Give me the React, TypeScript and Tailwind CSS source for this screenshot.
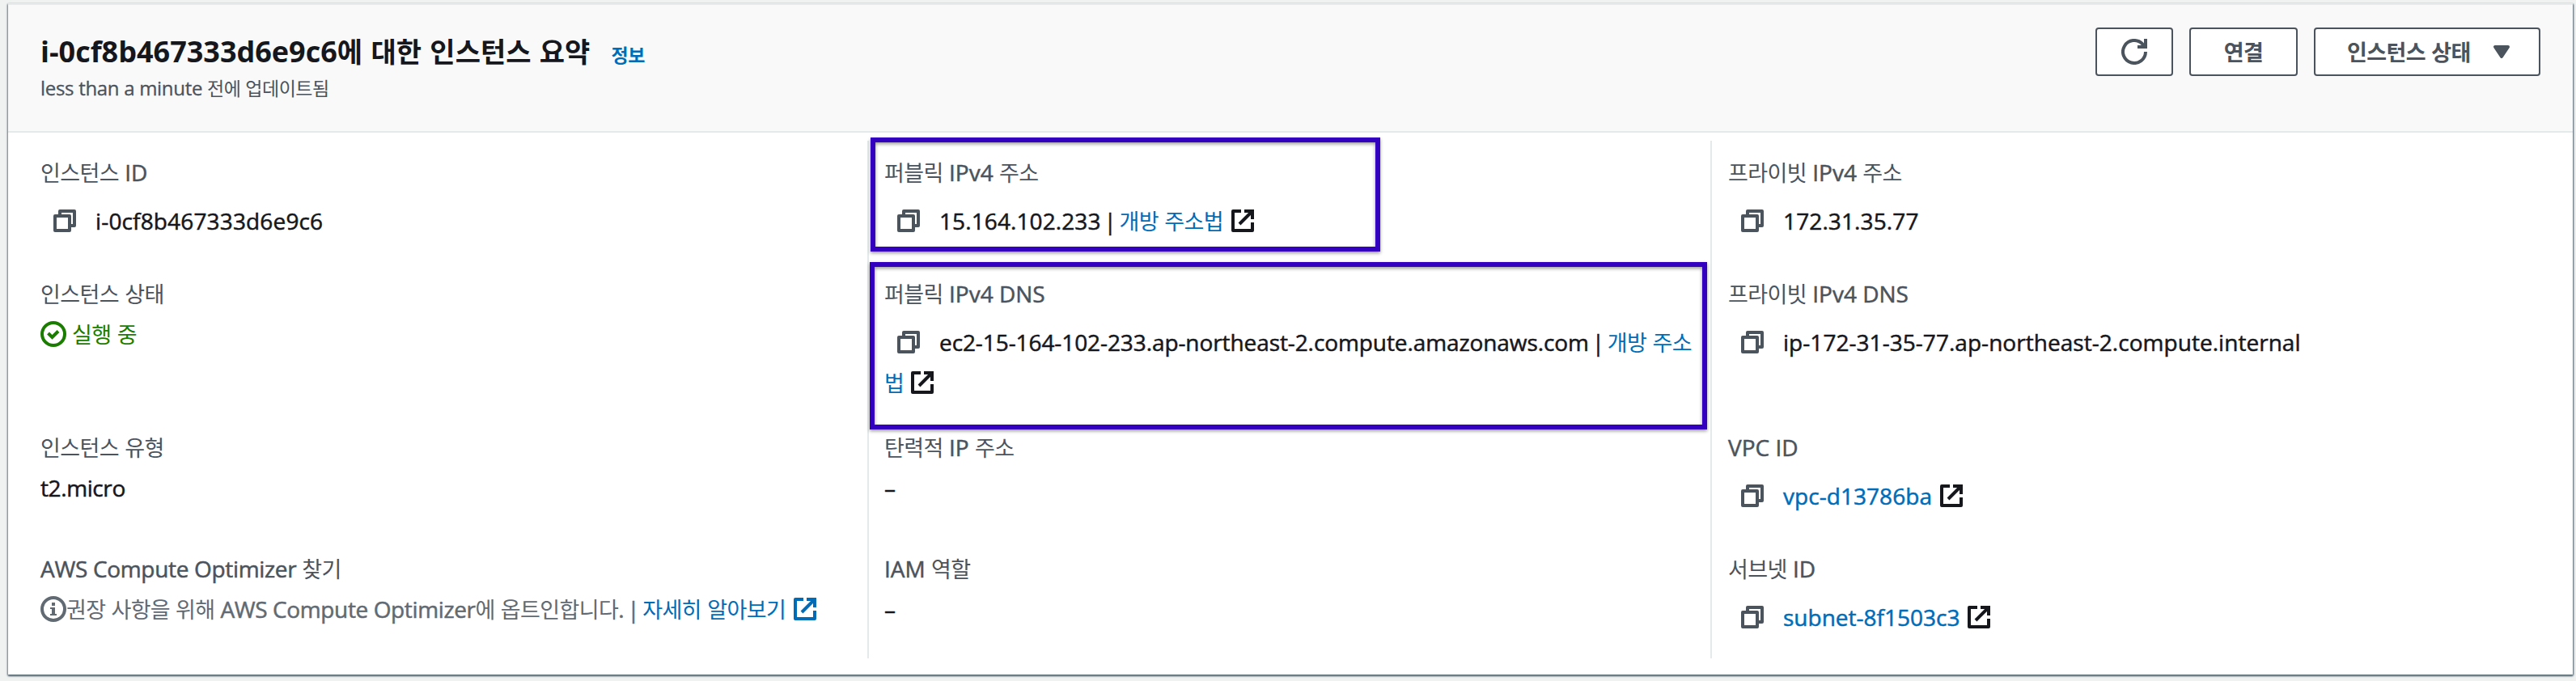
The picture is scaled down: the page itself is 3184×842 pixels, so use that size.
import React from "react";

const HANGUL = /([\uac00-\ud7a3]+)/;

/* Splits mixed text so that Hangul runs get their own, slightly narrower setting. */
function Txt({
  children,
  ko = "text-[27px] tracking-[-0.6px] font-normal",
  en = "tracking-normal",
}: {
  children: string;
  ko?: string;
  en?: string;
}) {
  return (
    <span className={`whitespace-pre ${en}`}>
      {children.split(HANGUL).map((part, i) =>
        HANGUL.test(part) ? (
          <span key={i} className={`font-['Noto_Sans_CJK_KR',sans-serif] leading-none [-webkit-text-stroke:0px] ${ko}`}>
            {part}
          </span>
        ) : (
          part
        )
      )}
    </span>
  );
}

function Pipe() {
  return <span className="mx-1 w-[15px] text-center">|</span>;
}

function CopyIcon() {
  return (
    <svg viewBox="0 0 28 28" className="ml-4 mr-6 size-7 shrink-0 text-[#4b535c]" fill="none" stroke="currentColor" strokeWidth="4" strokeLinejoin="round">
      <path d="M2 8h18v18H2z" />
      <path d="M8 6V2h18v18h-4" />
    </svg>
  );
}

function ExternalIcon({ className = "" }: { className?: string }) {
  return (
    <svg viewBox="0 0 28 28" className={`size-7 shrink-0 ${className}`} fill="none" stroke="currentColor" strokeWidth="4">
      <path strokeLinejoin="round" d="M12 2H2v24h24V16" />
      <path d="M16 2h10v10M26 2L10 18" />
    </svg>
  );
}

function Cell({ label, en, children }: { label: string; en?: string; children: React.ReactNode }) {
  return (
    <div className="flex flex-col">
      <div className="h-[50px] text-[#4b535c]">
        <Txt en={en}>{label}</Txt>
      </div>
      {children}
    </div>
  );
}

function CopyLine({ children }: { children: React.ReactNode }) {
  return (
    <div className="mt-2.5 flex h-[50px] items-center">
      <CopyIcon />
      {children}
    </div>
  );
}

function Column({ children, className }: { children: React.ReactNode; className: string }) {
  return (
    <div className={`grid h-[640px] w-[1042px] grid-rows-[150px_190px_150px_136px] pt-3.5 ${className}`}>
      {children}
    </div>
  );
}

const button = "flex h-[60px] items-center rounded-[4px] border-2 border-[#4b535c] bg-white font-bold text-[#4b535c]";
const buttonKo = "text-[27px] tracking-[-0.6px] font-bold";
const link = "text-[#006cb8]";

export default function App() {
  return (
    <div className="relative h-[842px] w-[3184px] overflow-hidden bg-[#f0f2f2] pl-2.5 pt-1 font-['Open_Sans','Noto_Sans_CJK_KR',sans-serif] text-[28px] leading-[50px] text-[#16171d] [-webkit-text-stroke:0.5px]">
      <main className="h-[830px] w-[3170px] border-t-2 border-[#e6eaea] bg-white shadow-[0_2px_2px_0_#5f6f78,1px_1px_2px_0_#5f6f78,-1px_1px_2px_0_#8a979d]">
        <header className="flex h-[158px] items-start justify-between border-b-2 border-[#e4e9e9] bg-[#f9f9f9] pl-10 pr-10 pt-7">
          <div className="flex flex-col">
            <div className="flex h-[60px] items-baseline">
              <h1 className="text-[36px] font-bold leading-[60px] [-webkit-text-stroke:0px] [word-spacing:1px]">
                <Txt ko="text-[34px] tracking-normal font-bold">i-0cf8b467333d6e9c6에 대한 인스턴스 요약</Txt>
              </h1>
              <span className={`ml-[26px] text-[24px] font-bold ${link}`}>
                <Txt ko="text-[23px] tracking-[-0.4px] font-bold">정보</Txt>
              </span>
            </div>
            <div className="-mt-px text-[24px] leading-[32px] text-[#4b535c] [-webkit-text-stroke:0.3px]">
              <Txt en="tracking-[-0.3px]" ko="text-[23px] tracking-[-0.5px] font-normal">
                less than a minute 전에 업데이트됨
              </Txt>
            </div>
          </div>
          <div className="flex gap-5">
            <button className={`${button} w-24 justify-center`}>
              <svg viewBox="0 0 32 32" className="size-8" fill="none" stroke="currentColor" strokeWidth="4">
                <path d="M30 16a14 14 0 1 1-4-9.800L28 10" />
                <path d="M30 0v10H20" />
              </svg>
            </button>
            <button className={`${button} w-[134px] justify-center`}>
              <Txt ko={buttonKo}>연결</Txt>
            </button>
            <button className={`${button} w-[280px] pl-[39px]`}>
              <Txt ko={buttonKo}>인스턴스 상태</Txt>
              <svg viewBox="0 0 16 16" className="ml-[22px] size-8" fill="currentColor" stroke="currentColor" strokeWidth="2" strokeLinejoin="round">
                <path d="M4 5h8l-4 6z" />
              </svg>
            </button>
          </div>
        </header>

        <section className="flex pl-5 pt-2.5">
          <Column className="pl-5">
            <Cell label="인스턴스 ID">
              <CopyLine>
                <Txt en="tracking-[0.15px]">i-0cf8b467333d6e9c6</Txt>
              </CopyLine>
            </Cell>
            <Cell label="인스턴스 상태">
              <div className="flex h-[50px] items-center text-[#1a7d00]">
                <svg viewBox="0 0 32 32" className="mr-[7px] size-8" fill="none" stroke="currentColor" strokeWidth="4">
                  <circle cx="16" cy="16" r="14" />
                  <path d="M9.500 15l5 5 7.500-7.500" />
                </svg>
                <Txt>실행 중</Txt>
              </div>
            </Cell>
            <Cell label="인스턴스 유형">
              <div className="h-[50px]">
                <Txt en="tracking-[-0.4px]">t2.micro</Txt>
              </div>
            </Cell>
            <Cell label="AWS Compute Optimizer 찾기" en="tracking-[-0.32px]">
              <div className="flex h-[50px] items-center text-[#616a72]">
                <svg viewBox="0 0 32 32" className="size-8" fill="none" stroke="currentColor" strokeWidth="4">
                  <circle cx="16" cy="16" r="14" />
                  <path d="M14 8h4v4h-4zM12 14h6v8h2v2h-8v-2h2v-6h-2z" fill="currentColor" stroke="none" />
                </svg>
                <Txt en="tracking-[-0.38px]">권장 사항을 위해 AWS Compute Optimizer에 옵트인합니다.</Txt>
                <Pipe />
                <span className={link}>
                  <Txt>자세히 알아보기</Txt>
                </span>
                <ExternalIcon className={`ml-2.5 ${link}`} />
              </div>
            </Cell>
          </Column>

          <Column className="border-l-2 border-[#e4e9e9] pl-[19px]">
            <Cell label="퍼블릭 IPv4 주소">
              <CopyLine>
                <Txt en="tracking-[0.1px]">15.164.102.233</Txt>
                <Pipe />
                <span className={link}>
                  <Txt>개방 주소법</Txt>
                </span>
                <ExternalIcon className="ml-2.5" />
              </CopyLine>
            </Cell>
            <Cell label="퍼블릭 IPv4 DNS">
              <CopyLine>
                <Txt en="tracking-[-0.09px]">ec2-15-164-102-233.ap-northeast-2.compute.amazonaws.com</Txt>
                <Pipe />
                <span className={link}>
                  <Txt>개방 주소</Txt>
                </span>
              </CopyLine>
              <div className="flex h-[50px] items-center">
                <span className={link}>
                  <Txt>법</Txt>
                </span>
                <ExternalIcon className="ml-[9px]" />
              </div>
            </Cell>
            <Cell label="탄력적 IP 주소">
              <div className="h-[50px]">–</div>
            </Cell>
            <Cell label="IAM 역할">
              <div className="h-[50px]">–</div>
            </Cell>
          </Column>

          <Column className="border-l-2 border-[#e4e9e9] pl-5">
            <Cell label="프라이빗 IPv4 주소">
              <CopyLine>
                <Txt en="tracking-[0.12px]">172.31.35.77</Txt>
              </CopyLine>
            </Cell>
            <Cell label="프라이빗 IPv4 DNS">
              <CopyLine>
                <Txt en="tracking-[0.04px]">ip-172-31-35-77.ap-northeast-2.compute.internal</Txt>
              </CopyLine>
            </Cell>
            <Cell label="VPC ID">
              <CopyLine>
                <span className={link}>
                  <Txt en="tracking-[0.05px]">vpc-d13786ba</Txt>
                </span>
                <ExternalIcon className="ml-2.5" />
              </CopyLine>
            </Cell>
            <Cell label="서브넷 ID">
              <CopyLine>
                <span className={link}>
                  <Txt>subnet-8f1503c3</Txt>
                </span>
                <ExternalIcon className="ml-2.5" />
              </CopyLine>
            </Cell>
          </Column>
        </section>
      </main>

      <div className="absolute left-[1076px] top-[170px] h-[141px] w-[630px] border-[6px] border-[#3300bf] shadow-[0_2px_4px_rgba(0,0,0,0.4),inset_0_2px_4px_rgba(0,0,0,0.4)]" />
      <div className="absolute left-[1075px] top-[324px] h-[207px] w-[1035px] border-[6px] border-[#3300bf] shadow-[0_2px_4px_rgba(0,0,0,0.4),inset_0_2px_4px_rgba(0,0,0,0.4)]" />
    </div>
  );
}
